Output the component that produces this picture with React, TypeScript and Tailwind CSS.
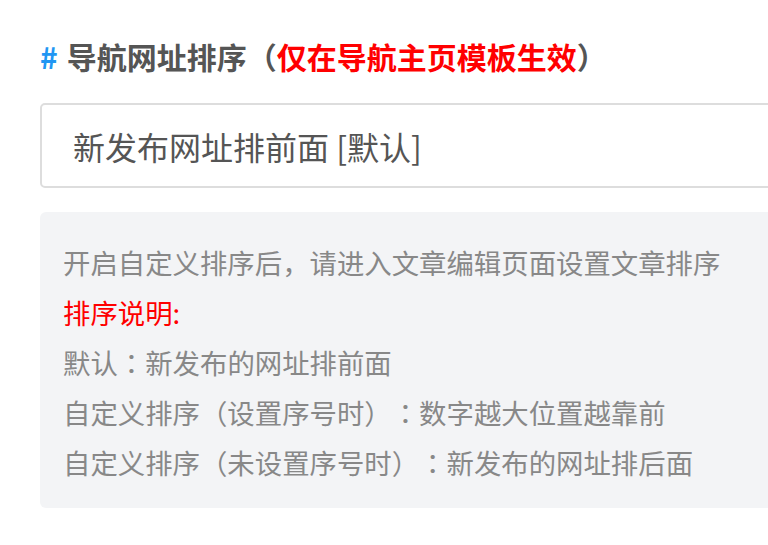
export default function App() {
  const notes = [
    "默认：新发布的网址排前面",
    "自定义排序（设置序号时）：数字越大位置越靠前",
    "自定义排序（未设置序号时）：新发布的网址排后面",
  ];

  // centre the full-width colon the way the original font does
  const renderNote = (text: string) =>
    text.split("：").map((part, i, arr) => (
      <span key={i}>
        {part}
        {i < arr.length - 1 && (
          <span style={{ fontFamily: '"Noto Sans CJK TC", sans-serif' }}>：</span>
        )}
      </span>
    ));

  return (
    <main
      className="w-[768px] h-[545px] overflow-hidden bg-white pl-10 pt-[35px] [text-spacing-trim:space-all]"
      style={{ fontFamily: '"Noto Sans CJK SC", "Noto Sans", sans-serif' }}
    >
      <h2 className="text-[30px] leading-[42px] font-bold text-[#555] whitespace-nowrap">
        <span className="text-[#2196f3] mr-[9px]">#</span>
        导航网址排序（<span className="text-[#ff0000]">仅在导航主页模板生效</span>）
      </h2>

      <div className="mt-[26px] w-[800px] h-[85px] flex items-center border-2 border-[#dddddd] rounded-[5px] pl-[31px] bg-white">
        <span className="text-[32px] text-[#555] whitespace-nowrap">
          新发布网址排前面 [默认]
        </span>
      </div>

      {/* Sort notes */}
      <div className="mt-[24px] w-[800px] bg-[#f3f4f6] rounded-[6px] pl-[23px] pt-[25px] pb-[21px] text-[27.4px] leading-[50px] text-[#888] whitespace-nowrap">
        <p>开启自定义排序后，请进入文章编辑页面设置文章排序</p>
        <p className="text-[#ff0000]">排序说明:</p>
        {notes.map((n) => (
          <p key={n}>{renderNote(n)}</p>
        ))}
      </div>
    </main>
  );
}
